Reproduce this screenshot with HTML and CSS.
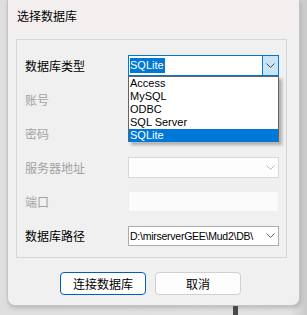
FILE: index.html
```html
<!DOCTYPE html>
<html lang="zh">
<head>
<meta charset="utf-8">
<title>选择数据库</title>
<link rel="stylesheet" href="styles.css">
</head>
<body>
<div class="window">
  <div class="titlebar">选择数据库</div>
  <div class="body">
    <div class="group">
      <div class="row">
        <span class="label">数据库类型</span>
        <div class="combo active">
          <span class="value"><span class="sel">SQLite</span></span>
          <span class="btn"><svg width="9" height="5" viewBox="0 0 9 5"><path d="M0.5 0.5 L4.5 4.5 L8.5 0.5" fill="none" stroke="#3c4a58" stroke-width="1"/></svg></span>
          <ul class="list">
            <li>Access</li>
            <li>MySQL</li>
            <li>ODBC</li>
            <li>SQL Server</li>
            <li class="cur">SQLite</li>
          </ul>
        </div>
      </div>
      <div class="row">
        <span class="label dis">账号</span>
        <div class="edit"></div>
      </div>
      <div class="row">
        <span class="label dis">密码</span>
        <div class="edit"></div>
      </div>
      <div class="row">
        <span class="label dis">服务器地址</span>
        <div class="combo disabled">
          <span class="value"></span>
          <span class="btn"><svg width="9" height="5" viewBox="0 0 9 5"><path d="M0.5 0.5 L4.5 4.5 L8.5 0.5" fill="none" stroke="#b8b8b8" stroke-width="1"/></svg></span>
        </div>
      </div>
      <div class="row">
        <span class="label dis">端口</span>
        <div class="edit"></div>
      </div>
      <div class="row">
        <span class="label">数据库路径</span>
        <div class="combo path">
          <span class="value">D:\mirserverGEE\Mud2\DB\</span>
          <span class="btn"><svg width="9" height="5" viewBox="0 0 9 5"><path d="M0.5 0.5 L4.5 4.5 L8.5 0.5" fill="none" stroke="#606060" stroke-width="1"/></svg></span>
        </div>
      </div>
    </div>
    <div class="buttons">
      <button class="pbtn default">连接数据库</button>
      <button class="pbtn">取消</button>
    </div>
  </div>
</div>
<div class="taskmark"></div>
</body>
</html>
```
FILE: styles.css
```css
html, body {
  margin: 0;
  padding: 0;
}
body {
  width: 307px;
  height: 315px;
  overflow: hidden;
  background: linear-gradient(to right, #dedede 0, #e2e2e2 290px, #c9c9c9 307px);
  font-family: "Noto Sans CJK SC", "Liberation Sans", sans-serif;
  font-size: 12px;
  color: #000;
  position: relative;
}
.window {
  margin-left: 7px;
  width: 291px;
  height: 305px;
  border: 1px solid #c4c4c4;
  border-top: 0;
  border-radius: 0 0 8px 8px;
  background: #f0f0f0;
  box-shadow: 1px 2px 4px rgba(0,0,0,0.18);
}
.titlebar {
  height: 31px;
  line-height: 31px;
  padding-left: 9px;
  background: #f3efef;
  border-radius: 8px 8px 0 0;
  font-size: 12px;
}
.body {
  padding: 8px 12px 0 8px;
}
.group {
  border: 1px solid #d6d6d6;
  height: 202px;
  padding: 15px 7px 0 8px;
  display: flex;
  flex-direction: column;
  gap: 13px;
}
.row {
  display: flex;
  align-items: center;
  height: 21px;
}
.label {
  width: 103px;
  flex: none;
  font-size: 12px;
}
.label.dis {
  color: #a3a3a3;
}
.combo, .edit {
  position: relative;
  width: 151px;
  height: 21px;
  box-sizing: border-box;
  flex: none;
}
.edit {
  background: #fbfbfb;
  border: 1px solid #efefef;
}
.combo {
  display: flex;
  background: #fff;
  border: 1px solid #7a7a7a;
}
.combo.active {
  border-color: #0078d7;
}
.combo.disabled {
  border-color: #d8d8d8;
  background: #fdfdfd;
}
.combo.path {
  border-color: #adadad;
  height: 20px;
}
.value {
  flex: 1;
  min-width: 0;
  display: flex;
  align-items: center;
  padding-left: 1px;
  font-family: "Liberation Sans", sans-serif;
  font-size: 11px;
  white-space: nowrap;
}
.path .value {
  padding-left: 1px;
  font-size: 10.5px;
  letter-spacing: -0.25px;
}
.sel {
  background: #0078d7;
  color: #fff;
  padding: 1px 1px 1px 0;
  line-height: 13px;
}
.btn {
  width: 15px;
  flex: none;
  display: flex;
  align-items: center;
  justify-content: center;
}
.active .btn {
  background: #cce4f7;
  border-left: 1px solid #0078d7;
}
.list {
  position: absolute;
  left: -1px;
  top: 20px;
  width: 151px;
  height: 66px;
  margin: 0;
  padding: 0;
  list-style: none;
  background: #fff;
  border: 1px solid #646464;
  box-sizing: border-box;
  box-shadow: 3px 3px 3px rgba(0,0,0,0.28);
  z-index: 5;
  font-family: "Liberation Sans", sans-serif;
  font-size: 11px;
}
.list li {
  height: 13px;
  line-height: 13px;
  padding-left: 1px;
}
.list li.cur {
  background: #0078d7;
  color: #fff;
}
.buttons {
  display: flex;
  justify-content: center;
  gap: 9px;
  margin-top: 14px;
  padding-right: 2px;
}
.pbtn {
  width: 86px;
  height: 23px;
  box-sizing: border-box;
  border: 1px solid #d0d0d0;
  border-radius: 4px;
  background: #fdfdfd;
  font-family: "Noto Sans CJK SC", sans-serif;
  font-size: 12px;
  color: #000;
  padding: 0;
}
.pbtn.default {
  border-color: #005fb8;
  background: #fff;
}
.taskmark {
  position: absolute;
  left: 233px;
  top: 306px;
  width: 5px;
  height: 9px;
  background: #4a4a4a;
}
```
